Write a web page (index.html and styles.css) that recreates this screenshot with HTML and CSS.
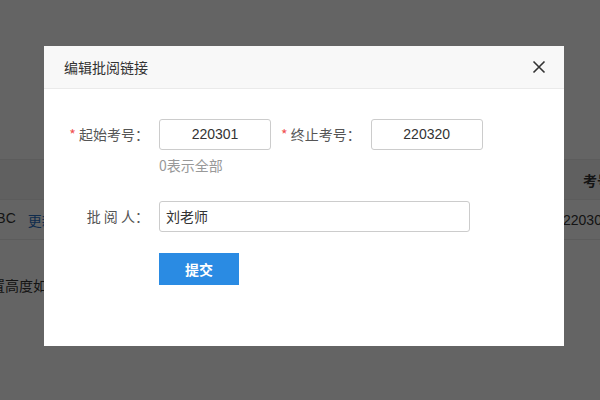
FILE: index.html
```html
<!DOCTYPE html>
<html lang="zh-CN">
<head>
<meta charset="utf-8">
<title>编辑批阅链接</title>
<link rel="stylesheet" href="styles.css">
</head>
<body>
<div class="page">
  <div class="page-top"></div>
  <div class="table">
    <div class="row head">
      <div class="cell-left"></div>
      <div class="cell-right head-right">考号</div>
    </div>
    <div class="row data">
      <div class="cell-left"><span class="abc">ABC</span><span class="link">更新</span></div>
      <div class="cell-right data-right">220301</div>
    </div>
  </div>
  <p class="note">置高度如</p>
</div>
<div class="mask"></div>
<div class="dialog">
  <div class="dialog-header">
    <span class="dialog-title">编辑批阅链接</span>
    <svg class="close" width="14" height="14" viewBox="0 0 14 14"><path d="M1.5 1.5 L12.5 12.5 M12.5 1.5 L1.5 12.5" stroke="#333" stroke-width="1.6" fill="none"/></svg>
  </div>
  <div class="dialog-body">
    <div class="form-row">
      <label class="label"><span class="req">*</span> 起始考号：</label>
      <div class="field">
        <div class="input short center">220301</div>
        <div class="hint">0表示全部</div>
      </div>
      <label class="label2"><span class="req">*</span> 终止考号：</label>
      <div class="field">
        <div class="input short center">220320</div>
      </div>
    </div>
    <div class="form-row row2">
      <label class="label">批 阅 人：</label>
      <div class="field">
        <div class="input long">刘老师</div>
      </div>
    </div>
    <div class="form-row row3">
      <div class="label"></div>
      <button class="btn">提交</button>
    </div>
  </div>
</div>
</body>
</html>
```
FILE: styles.css
```css
html, body {
  margin: 0;
  padding: 0;
  width: 600px;
  height: 400px;
  overflow: hidden;
  font-family: "Noto Sans CJK SC", "Noto Sans", sans-serif;
  font-size: 14px;
  background: #fafafa;
}
.page {
  width: 600px;
  height: 400px;
  overflow: hidden;
  color: #333;
}
.page-top {
  height: 159px;
  border-bottom: 1px solid #e6e6e6;
}
.row {
  display: flex;
  height: 39px;
  border-bottom: 1px solid #e6e6e6;
  align-items: center;
  white-space: nowrap;
}
.head {
  background: #f0f0f0;
  font-weight: bold;
}
.cell-left {
  flex: 1;
  display: flex;
  gap: 12px;
}
.abc {
  margin-left: -13px;
  font-family: "Liberation Sans", sans-serif;
}
.link { color: #2a6fc0; }
.cell-right { width: 37px; overflow: hidden; }
.head-right { width: 17px; }
.data-right { font-family: "Liberation Sans", sans-serif; font-size: 14px; }
.note {
  margin: 35px 0 0 -9px;
  white-space: nowrap;
}
.mask {
  position: fixed;
  inset: 0;
  background: rgba(0, 0, 0, 0.6);
}
.dialog {
  position: absolute;
  left: 44px;
  top: 46px;
  width: 520px;
  height: 300px;
  background: #fff;
}
.dialog-header {
  height: 42px;
  background: #f8f8f8;
  border-bottom: 1px solid #eaeaea;
  display: flex;
  align-items: center;
  justify-content: space-between;
  padding: 0 18px 0 20px;
}
.dialog-title {
  color: #333;
  font-size: 14px;
}
.close { display: block; }
.dialog-body {
  padding: 30px 0 0 15px;
}
.form-row {
  display: flex;
  align-items: flex-start;
}
.label, .label2 {
  height: 31px;
  line-height: 31px;
  color: #555;
  white-space: nowrap;
}
.label {
  width: 90px;
  padding-right: 10px;
  text-align: right;
}
.label2 {
  margin-left: 10px;
  padding-right: 10px;
}
.req { color: #f05050; }
.input {
  box-sizing: border-box;
  height: 31px;
  line-height: 29px;
  border: 1px solid #ccc;
  border-radius: 3px;
  color: #333;
  padding: 0 6px;
  font-family: "Liberation Sans", "Noto Sans CJK SC", sans-serif;
}
.short { width: 112px; }
.center { text-align: center; }
.long {
  width: 311px;
  font-family: "Noto Sans CJK SC", sans-serif;
}
.hint {
  color: #999;
  height: 20px;
  line-height: 20px;
  margin-top: 5px;
}
.row2 { margin-top: 26px; }
.row3 { margin-top: 21px; }
.row3 .label { height: 32px; }
.btn {
  width: 80px;
  height: 32px;
  border: none;
  background: #2a8be3;
  color: #fff;
  font-weight: bold;
  font-size: 14px;
  font-family: "Noto Sans CJK SC", sans-serif;
  padding: 0;
}
```
